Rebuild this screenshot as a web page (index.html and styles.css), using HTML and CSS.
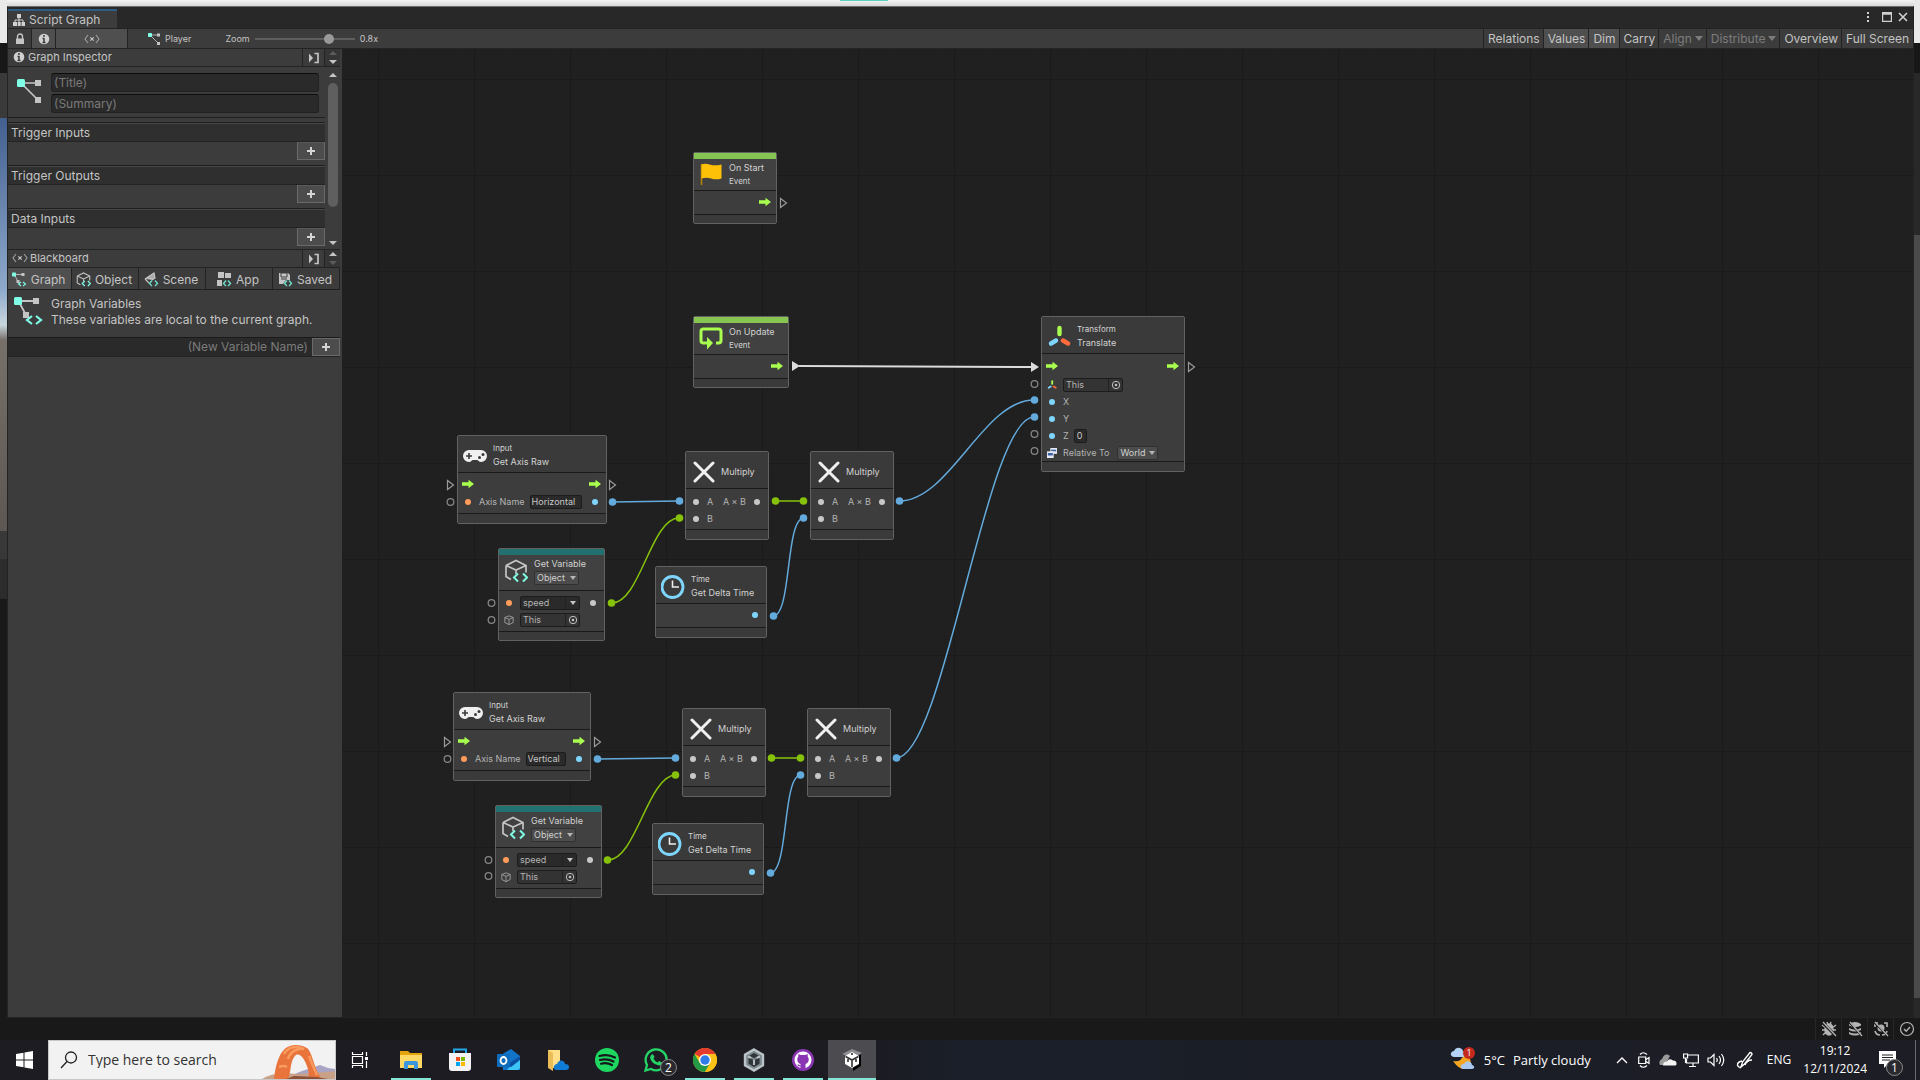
FILE: index.html
```html
<!DOCTYPE html>
<html lang="en">
<head>
<meta charset="utf-8">
<title>Script Graph</title>
<link rel="stylesheet" href="styles.css">
</head>
<body>
<svg class="defs" width="0" height="0" aria-hidden="true">
  <symbol id="arrow" viewBox="0 0 12 10"><path d="M0 3.2h6.5V.8L12 5 6.500 9.200V6.800H0z" fill="#a8ff4e"/></symbol>
  <symbol id="pad" viewBox="0 0 24 24"><path d="M6 6h12a6 6 0 0 1 0 12c-2 0-3-2-4-2h-4c-1 0-2 2-4 2A6 6 0 0 1 6 6z" fill="#f0f0f0"/><path d="M3 12h6M6 9v6" stroke="#3a3a3a" stroke-width="1.600"/><circle cx="20" cy="10.500" r="1.500" fill="#3a3a3a"/><circle cx="16.500" cy="13.500" r="1.500" fill="#3a3a3a"/></symbol>
  <symbol id="times" viewBox="0 0 24 24"><path d="M4 3l18 18M22 3L4 21" stroke="#f0f0f0" stroke-width="3" stroke-linecap="round"/></symbol>
  <symbol id="clock" viewBox="0 0 24 24"><circle cx="11.500" cy="12" r="10.500" fill="none" stroke="#7fd6fd" stroke-width="2.800"/><path d="M11.500 5.500V12h6.500" fill="none" stroke="#eee" stroke-width="1.600"/></symbol>
  <symbol id="cube" viewBox="0 0 24 24"><path d="M2 6.500L12 1.500l10 5v7M2 6.500v11l5 3M2 6.500l10 4.500 10-4.500M12 11v4" fill="none" stroke="#c4c4c4" stroke-width="1.700"/><path d="M14 14.500l-4 4 4 4M19 14.500l4 4-4 4" fill="none" stroke="#7ffbe4" stroke-width="2"/></symbol>
  <symbol id="cubelet" viewBox="0 0 12 12"><path d="M1 3l5-2 5 2v6l-5 2.500L1 9zM1 3l5 2.300L11 3M6 5.300v6" fill="none" stroke="#aaa" stroke-width="1"/></symbol>
  <symbol id="axes" viewBox="0 0 24 24"><path d="M12.500 3v6" stroke="#a8ff4e" stroke-width="4.400" stroke-linecap="round"/><path d="M9 15.500l-5 3" stroke="#7fd6fd" stroke-width="4.400" stroke-linecap="round"/><path d="M16 15.500l5 3" stroke="#ff6b3d" stroke-width="4.400" stroke-linecap="round"/></symbol>
  <symbol id="nodes" viewBox="0 0 24 24"><path d="M4 4h17M4 4l17 17" stroke="#c4c4c4" stroke-width="1.700"/><rect x="18" y="1" width="6" height="6" fill="#c4c4c4"/><rect x="18" y="18" width="6" height="6" fill="#c4c4c4"/><rect x="0" y="0" width="8" height="8" rx="1.500" fill="#7fffe6"/></symbol>
  <symbol id="graphvar" viewBox="0 0 30 30"><path d="M4 5h19M5 6l7 13" stroke="#c4c4c4" stroke-width="1.800"/><rect x="19" y="2" width="6" height="6" fill="#c4c4c4"/><rect x="9" y="16" width="6" height="6" fill="#c4c4c4"/><rect x="0" y="1" width="8" height="8" rx="1.500" fill="#7fffe6"/><path d="M18 20l-5 4 5 4M22 20l5 4-5 4" fill="none" stroke="#7fffe6" stroke-width="2.200"/></symbol>
  <symbol id="info" viewBox="0 0 12 12"><circle cx="6" cy="6" r="5.300" fill="#d0d0d0"/><path d="M6 2v2M6 5v4.500M4.500 5.500H6M4.500 9.500h3" stroke="#3c3c3c" stroke-width="1.500"/></symbol>
  <symbol id="vars" viewBox="0 0 16 10"><path d="M4 1L1 5l3 4M12 1l3 4-3 4" fill="none" stroke="#a0a0a0" stroke-width="1.100"/><path d="M6.300 3.300l3.400 3.400M9.700 3.300L6.300 6.700" stroke="#c4c4c4" stroke-width="1.200"/></symbol>
  <symbol id="dock" viewBox="0 0 12 12"><path d="M1 1.500L5 6 1 10.500z" fill="#c4c4c4"/><path d="M6.500 1.500H10v9H6.500" fill="none" stroke="#c4c4c4" stroke-width="1.700"/></symbol>
  <symbol id="plus" viewBox="0 0 10 10"><path d="M5 1v8M1 5h8" stroke="#d4d4d4" stroke-width="2"/></symbol>
  <symbol id="target" viewBox="0 0 10 10"><circle cx="5" cy="5" r="3.700" fill="none" stroke="#c0c0c0" stroke-width="1"/><circle cx="5" cy="5" r="1.300" fill="#c0c0c0"/></symbol>
  <symbol id="unity" viewBox="0 0 24 24"><path d="M12 1.500l9 5.200v10.600l-9 5.200-9-5.200V6.700z" fill="#7d888f" stroke="#b9c3c9" stroke-width="2.400"/><path d="M12 12.500V19l-5.500-3.200V9.300zM12 12.500V19l5.500-3.200V9.300z" fill="#2e3539"/><path d="M12 5l4.500 2.600L12 10.200 7.500 7.600z" fill="#2e3539"/><path d="M12 12v5M9 10l-3-1.500M15 10l3-1.500" stroke="#c6ced2" stroke-width="1.800"/></symbol>
</svg>

<main class="desktop">
  <section class="window" aria-label="Script Graph">
    <header class="titlebar">
      <div class="tab"><svg width="12" height="12" viewBox="0 0 12 12"><path d="M6 3v6M2 9V6h8v3" fill="none" stroke="#d0d0d0" stroke-width="1"/><path d="M4 0h4v4H4zM0 8h4v4H0zM4.700 8h3v4h-3zM8.500 8H12v4H8.500z" fill="#d0d0d0"/></svg><h1>Script Graph</h1></div>
      <div class="wincontrols">
        <button aria-label="Menu"><svg width="4" height="12" viewBox="0 0 4 12"><path d="M1 1h2v2H1zM1 5h2v2H1zM1 9h2v2H1z" fill="#d0d0d0"/></svg></button>
        <button aria-label="Maximize"><svg width="10" height="10" viewBox="0 0 10 10"><path d="M.5.500h9v9h-9zM0 2h10" fill="none" stroke="#d0d0d0" stroke-width="1.400"/></svg></button>
        <button aria-label="Close"><svg width="10" height="10" viewBox="0 0 10 10"><path d="M1 1l8 8M9 1L1 9" stroke="#d0d0d0" stroke-width="1.600"/></svg></button>
      </div>
    </header>

    <div class="toolbar">
      <button class="tool" aria-label="Lock"><svg width="10" height="12" viewBox="0 0 10 12"><path d="M2.500 6V3.500a2.500 2.500 0 0 1 5 0V6" fill="none" stroke="#c4c4c4" stroke-width="1.400"/><rect x="1" y="5.500" width="8" height="5.500" fill="#c4c4c4"/></svg></button>
      <button class="tool on" aria-label="Inspector"><svg width="12" height="12"><use href="#info"/></svg></button>
      <button class="tool wide on" aria-label="Blackboard"><svg width="16" height="10"><use href="#vars"/></svg></button>
      <span class="crumb"><svg width="12" height="12"><use href="#nodes"/></svg>Player</span>
      <label class="zoom">Zoom <input type="range" min="0" max="100" value="77"> <output>0.8x</output></label>
      <nav class="toggles">
        <button>Relations</button><button class="on">Values</button><button class="on">Dim</button><button>Carry</button><button class="off">Align<i></i></button><button class="off">Distribute<i></i></button><button>Overview</button><button>Full Screen</button>
      </nav>
    </div>

    <div class="content">
      <aside class="side">
        <div class="panelhead"><h2><svg width="12" height="12"><use href="#info"/></svg>Graph Inspector</h2><button class="dock" aria-label="Dock inspector"><svg width="12" height="12"><use href="#dock"/></svg></button><span class="updown"><i class="up dim"></i><i class="down"></i></span></div>
        <div class="inspector">
          <div class="fields">
            <div class="meta"><svg width="24" height="24"><use href="#nodes"/></svg><div class="inputs"><input aria-label="Title" placeholder="(Title)"><input aria-label="Summary" placeholder="(Summary)"></div></div>
            <section class="ports"><h3>Trigger Inputs</h3><div><button aria-label="Add trigger input"><svg width="10" height="10"><use href="#plus"/></svg></button></div></section>
            <section class="ports"><h3>Trigger Outputs</h3><div><button aria-label="Add trigger output"><svg width="10" height="10"><use href="#plus"/></svg></button></div></section>
            <section class="ports"><h3>Data Inputs</h3><div><button aria-label="Add data input"><svg width="10" height="10"><use href="#plus"/></svg></button></div></section>
          </div>
          <div class="scroll"><i class="up"></i><span></span><i class="down"></i></div>
        </div>
        <div class="panelhead board"><h2><svg width="16" height="10"><use href="#vars"/></svg>Blackboard</h2><button class="dock" aria-label="Dock blackboard"><svg width="12" height="12"><use href="#dock"/></svg></button><span class="updown"><i class="up"></i><i class="down dim"></i></span></div>
        <nav class="tabs">
          <button class="on"><svg width="15" height="15"><use href="#graphvar"/></svg>Graph</button>
          <button><svg width="15" height="15"><use href="#cube"/></svg>Object</button>
          <button><svg width="15" height="15" viewBox="0 0 15 15"><path d="M1 7l9-6 1 5-3 2M1 7l4 4M4 6l5 1" fill="#aaa" stroke="#c4c4c4" stroke-width="1.200"/><path d="M8 8.500L5.500 11.500 8 14M11 8.500l2.500 3L11 14" fill="none" stroke="#6fdcc9" stroke-width="1.400"/></svg>Scene</button>
          <button><svg width="15" height="15" viewBox="0 0 15 15"><path d="M1 0h6v6H1zM8 1h6v5H8zM0 8h5v6H0z" fill="#c4c4c4"/><path d="M9 8.500L6.500 11.500 9 14M11 8.500l2.500 3L11 14" fill="none" stroke="#6fdcc9" stroke-width="1.400"/></svg>App</button>
          <button><svg width="15" height="15" viewBox="0 0 15 15"><path d="M1 1h9l2 2v5H8l-3 4H1z" fill="#c4c4c4"/><path d="M3 1h6v4H3zM3 7h6" fill="none" stroke="#3c3c3c"/><path d="M9 8.500L6.500 11.500 9 14M11 8.500l2.500 3L11 14" fill="none" stroke="#6fdcc9" stroke-width="1.400"/></svg>Saved</button>
        </nav>
        <div class="about"><svg width="30" height="30"><use href="#graphvar"/></svg><div><h3>Graph Variables</h3><p>These variables are local to the current graph.</p></div></div>
        <div class="newvar"><input aria-label="New variable name" placeholder="(New Variable Name)"><button aria-label="Add variable"><svg width="10" height="10"><use href="#plus"/></svg></button></div>
      </aside>

      <div class="canvas">
        <svg class="wires" width="100%" height="100%">
          <defs>
            <pattern id="grid" x="36" y="30" width="96" height="96" patternUnits="userSpaceOnUse">
              <path d="M10.500 0v96M19.500 0v96M29.500 0v96M38.500 0v96M48.500 0v96M58.500 0v96M67.500 0v96M77.500 0v96M86.500 0v96M0 10.500h96M0 19.500h96M0 29.500h96M0 38.500h96M0 48.500h96M0 58.500h96M0 67.500h96M0 77.500h96M0 86.500h96" stroke="#1f1f1f"/>
              <path d="M.5 0v96M0 .5h96" stroke="#1a1a1a"/>
            </pattern>
          </defs>
          <rect width="100%" height="100%" fill="url(#grid)"/>
          <g transform="translate(-342 -49)" fill="none">
            <path d="M799 366L1031 367" stroke="#dcdcdc" stroke-width="2"/>
            <g stroke="#63aadd" stroke-width="1.500">
              <path d="M612 502L679 501"/>
              <path d="M899 501C950 501 983 400 1034 400"/>
              <path d="M773 616C792 616 785 518 804 518"/>
              <path d="M598 759L676 758"/>
              <path d="M896 758C944 758 986 417 1034 417"/>
              <path d="M770 873C789 873 782 775 801 775"/>
            </g>
            <g stroke="#86c20a" stroke-width="1.500">
              <path d="M612 603C640 603 651 518 679 518"/>
              <path d="M775 501H804M771 758H801"/>
              <path d="M608 860C636 860 648 775 676 775"/>
            </g>
            <g fill="#63aadd"><circle cx="612.500" cy="502" r="3.800"/><circle cx="679.500" cy="501" r="3.800"/><circle cx="803.500" cy="518" r="3.800"/><circle cx="899.500" cy="501" r="3.800"/><circle cx="773.500" cy="616" r="3.800"/><circle cx="1034.500" cy="400" r="3.800"/><circle cx="1034.500" cy="417" r="3.800"/><circle cx="597.500" cy="759" r="3.800"/><circle cx="675.500" cy="758" r="3.800"/><circle cx="800.500" cy="775" r="3.800"/><circle cx="896.500" cy="758" r="3.800"/><circle cx="770.500" cy="873" r="3.800"/></g>
            <g fill="#86c20a"><circle cx="679.500" cy="518" r="3.800"/><circle cx="775.500" cy="501" r="3.800"/><circle cx="803.500" cy="501" r="3.800"/><circle cx="611.500" cy="603" r="3.800"/><circle cx="675.500" cy="775" r="3.800"/><circle cx="771.500" cy="758" r="3.800"/><circle cx="800.500" cy="758" r="3.800"/><circle cx="607.500" cy="860" r="3.800"/></g>
            <g stroke="#858585" stroke-width="1.300"><circle cx="1034.500" cy="384" r="3.300"/><circle cx="1034.500" cy="434" r="3.300"/><circle cx="1034.500" cy="451" r="3.300"/><circle cx="450.500" cy="502" r="3.300"/><circle cx="491.500" cy="603" r="3.300"/><circle cx="491.500" cy="620" r="3.300"/><circle cx="447.500" cy="759" r="3.300"/><circle cx="488.500" cy="860" r="3.300"/><circle cx="488.500" cy="876" r="3.300"/></g>
            <g stroke="#9a9a9a" stroke-width="1.200"><path d="M780.500 198.500v9l6-4.500zM1188.500 362.500v9l6-4.500zM447.500 480.500v9l6-4.500zM609.500 480.500v9l6-4.500zM444.500 737.500v9l6-4.500zM594.500 737.500v9l6-4.500z"/></g>
            <path d="M792 361v10l8-5zM1031 362v10l8-5z" fill="#dcdcdc"/>
          </g>
        </svg>

        <article class="node start n84">
          <div class="band green"></div>
          <header><svg width="24" height="24" viewBox="0 0 24 24"><path d="M2.500 2v21" stroke="#b98500" stroke-width="1.500"/><path d="M2.500 2.500c6-3 9 3 20 0v14c-9 3-12-3-20 0z" fill="#ffc107"/></svg><div><h4>On Start</h4><small>Event</small></div></header>
          <div class="body"><div class="row end"><svg class="cell"><use href="#arrow"/></svg></div></div><footer></footer>
        </article>

        <article class="node update n96">
          <div class="band green"></div>
          <header><svg width="24" height="24" viewBox="0 0 24 24"><path d="M17 17h2.500q2.500 0 2.500-2.500v-9Q22 3 19.500 3h-15Q2 3 2 5.500v9Q2 17 4.500 17H8" fill="none" stroke="#a8ff4e" stroke-width="3"/><path d="M8 11l6 6-6 6.500z" fill="#a8ff4e"/></svg><div><h4>On Update</h4><small>Event</small></div></header>
          <div class="body"><div class="row end"><svg class="cell"><use href="#arrow"/></svg></div></div><footer></footer>
        </article>

        <article class="node translate n144">
          <header><svg width="24" height="24"><use href="#axes"/></svg><div><small>Transform</small><h4>Translate</h4></div></header>
          <div class="body">
            <div class="row flow"><svg class="cell"><use href="#arrow"/></svg><svg class="cell last"><use href="#arrow"/></svg></div>
            <div class="row"><svg class="cell"><use href="#axes"/></svg><span class="ref"><input aria-label="Target" value="This"><button aria-label="Pick target"><svg width="10" height="10"><use href="#target"/></svg></button></span></div>
            <div class="row"><b class="cell dot blue"></b>X</div>
            <div class="row"><b class="cell dot blue"></b>Y</div>
            <div class="row"><b class="cell dot blue"></b><label>Z <input class="value one" value="0"></label></div>
            <div class="row"><svg class="cell" viewBox="0 0 12 12"><path d="M4 0h8v7H4z" fill="#e6ecf5"/><path d="M5 2h6v2H5z" fill="#3c62a8"/><path d="M0 4h8v8H0z" fill="#e6ecf5"/><path d="M1 6h6v3H1z" fill="#3c62a8"/></svg><label class="relative">Relative To <span class="select"><select class="world"><option>World</option><option>Self</option></select></span></label></div>
          </div><footer></footer>
        </article>

        <article class="node axis1 n150">
          <header><svg width="24" height="24"><use href="#pad"/></svg><div><small>Input</small><h4>Get Axis Raw</h4></div></header>
          <div class="body">
            <div class="row"><svg class="cell"><use href="#arrow"/></svg><svg class="cell last"><use href="#arrow"/></svg></div>
            <div class="row"><b class="cell dot orange"></b><label>Axis Name <input class="value horizontal" value="Horizontal"></label><b class="cell dot blue last"></b></div>
          </div><footer></footer>
        </article>

        <article class="node mult1 n84">
          <header><svg width="24" height="24"><use href="#times"/></svg><div><h4>Multiply</h4></div></header>
          <div class="body low">
            <div class="row"><b class="cell dot"></b>A<span class="out">A × B</span><b class="cell dot"></b></div>
            <div class="row"><b class="cell dot"></b>B</div>
          </div><footer></footer>
        </article>

        <article class="node mult2 n84">
          <header><svg width="24" height="24"><use href="#times"/></svg><div><h4>Multiply</h4></div></header>
          <div class="body low">
            <div class="row"><b class="cell dot"></b>A<span class="out">A × B</span><b class="cell dot"></b></div>
            <div class="row"><b class="cell dot"></b>B</div>
          </div><footer></footer>
        </article>

        <article class="node var1 n107">
          <div class="band teal"></div>
          <header><svg width="24" height="24"><use href="#cube"/></svg><div><h4>Get Variable</h4><span class="select"><select aria-label="Variable kind"><option>Object</option></select></span></div></header>
          <div class="body vars">
            <div class="row"><b class="cell dot orange"></b><span class="ref name"><input aria-label="Variable name" value="speed"><button aria-label="Choose variable"><i class="down"></i></button></span><b class="cell dot last"></b></div>
            <div class="row"><svg class="cell"><use href="#cubelet"/></svg><span class="ref"><input aria-label="Target" value="This"><button aria-label="Pick target"><svg width="10" height="10"><use href="#target"/></svg></button></span></div>
          </div><footer></footer>
        </article>

        <article class="node time1 n112">
          <header><svg width="24" height="24"><use href="#clock"/></svg><div><small>Time</small><h4>Get Delta Time</h4></div></header>
          <div class="body"><div class="row end"><b class="cell dot blue"></b></div></div><footer></footer>
        </article>

        <article class="node axis2 n138">
          <header><svg width="24" height="24"><use href="#pad"/></svg><div><small>Input</small><h4>Get Axis Raw</h4></div></header>
          <div class="body">
            <div class="row"><svg class="cell"><use href="#arrow"/></svg><svg class="cell last"><use href="#arrow"/></svg></div>
            <div class="row"><b class="cell dot orange"></b><label>Axis Name <input class="value vertical" value="Vertical"></label><b class="cell dot blue last"></b></div>
          </div><footer></footer>
        </article>

        <article class="node mult3 n84">
          <header><svg width="24" height="24"><use href="#times"/></svg><div><h4>Multiply</h4></div></header>
          <div class="body low">
            <div class="row"><b class="cell dot"></b>A<span class="out">A × B</span><b class="cell dot"></b></div>
            <div class="row"><b class="cell dot"></b>B</div>
          </div><footer></footer>
        </article>

        <article class="node mult4 n84">
          <header><svg width="24" height="24"><use href="#times"/></svg><div><h4>Multiply</h4></div></header>
          <div class="body low">
            <div class="row"><b class="cell dot"></b>A<span class="out">A × B</span><b class="cell dot"></b></div>
            <div class="row"><b class="cell dot"></b>B</div>
          </div><footer></footer>
        </article>

        <article class="node var2 n107">
          <div class="band teal"></div>
          <header><svg width="24" height="24"><use href="#cube"/></svg><div><h4>Get Variable</h4><span class="select"><select aria-label="Variable kind"><option>Object</option></select></span></div></header>
          <div class="body vars">
            <div class="row"><b class="cell dot orange"></b><span class="ref name"><input aria-label="Variable name" value="speed"><button aria-label="Choose variable"><i class="down"></i></button></span><b class="cell dot last"></b></div>
            <div class="row"><svg class="cell"><use href="#cubelet"/></svg><span class="ref"><input aria-label="Target" value="This"><button aria-label="Pick target"><svg width="10" height="10"><use href="#target"/></svg></button></span></div>
          </div><footer></footer>
        </article>

        <article class="node time2 n112">
          <header><svg width="24" height="24"><use href="#clock"/></svg><div><small>Time</small><h4>Get Delta Time</h4></div></header>
          <div class="body"><div class="row end"><b class="cell dot blue"></b></div></div><footer></footer>
        </article>
      </div>
    </div>
  </section>

  <div class="status">
    <span><svg width="16" height="16" viewBox="0 0 16 16"><path d="M8 3c3 0 4 3 4 6s-2 5-4 5-4-2-4-5 1-6 4-6zM1 4l4 3M15 4l-4 3M1 9h14M2 14l3-3M14 14l-3-3M6 1l1 3M10 1L9 4" fill="#b4b4b4" stroke="#b4b4b4" stroke-width="1.400"/><path d="M1 1l14 14" stroke="#1a1a1a" stroke-width="3"/><path d="M2 1l13 14" stroke="#b4b4b4" stroke-width="1.300"/></svg></span>
    <span><svg width="16" height="16" viewBox="0 0 16 16"><path d="M2 3q6-4 12 0v1.500q-6 3-12 0zM2 7q6 3 12 0v2q-6 3-12 0zM2 11q6 3 12 0v2q-6 3-12 0z" fill="#b4b4b4"/><path d="M2 1l13 14" stroke="#1a1a1a" stroke-width="2"/><path d="M3 1l12 14" stroke="#b4b4b4" stroke-width="1.300"/></svg></span>
    <span><svg width="16" height="16" viewBox="0 0 16 16"><path d="M5 2H2v4M11 2h3v4M2 10q1 4 5 4M14 10q-1 4-5 4" fill="none" stroke="#b4b4b4" stroke-width="1.600"/><circle cx="8" cy="7" r="3.500" fill="#b4b4b4"/><path d="M1 1l14 14" stroke="#1a1a1a" stroke-width="2"/><path d="M2 1l13 14" stroke="#b4b4b4" stroke-width="1.300"/></svg></span>
    <span><svg width="16" height="16" viewBox="0 0 16 16"><circle cx="8" cy="8" r="6.500" fill="none" stroke="#b4b4b4" stroke-width="1.200"/><path d="M5 8l2.200 2.300L11 6" fill="none" stroke="#b4b4b4" stroke-width="1.400"/></svg></span>
  </div>
</main>

<footer class="taskbar">
  <button class="app" aria-label="Start"><svg width="17" height="18" viewBox="0 0 17 18"><path d="M0 3l7.500-1.200v6.700H0zM8.500 1.600L17 0v8.500H8.500zM0 9.500h7.500v6.700L0 15zM8.500 9.500H17V18l-8.500-1.500z" fill="#fff"/></svg></button>
  <label class="search"><svg width="18" height="18" viewBox="0 0 18 18"><circle cx="11" cy="6.500" r="5.500" fill="none" stroke="#222" stroke-width="1.300"/><path d="M7 10.500L1 17" stroke="#222" stroke-width="1.300"/></svg><input aria-label="Search" placeholder="Type here to search"><svg class="arch" width="76" height="36" viewBox="-3 0 76 36"><path d="M40 28q10-3 18-6 8 4 18 4v10H20z" fill="#a9a4c4"/><path d="M0 36q12-8 34-5l42-3v8z" fill="#c9a088"/><path d="M12 36c2-16 6-30 16-33 5-2 12-1 17 2 6 5 7 22 15 31H46c3-4-2-19-7-23-4-3-6-1-8 3-3 6-2 13-5 20z" fill="#e8743c"/><path d="M22 11c4-7 12-9 20-5-6-1-14 2-16 10M47 13q3 8 8 19M17 24q5-2 8 0" fill="none" stroke="#f99b5e" stroke-width="2.500"/><path d="M24 36l8-3 22 1 12 2z" fill="#8d5038"/></svg></label>
  <nav class="apps">
    <button class="app view" aria-label="Task View"><svg width="18" height="16" viewBox="0 0 18 16"><path d="M1.500 0v2.500h10V0M1.500 16v-2.500h10V16M1.500 4.500h10v7h-10zM15.500 0v4M15.500 9v7" fill="none" stroke="#fff" stroke-width="1.200"/><path d="M14 5h3v3h-3z" fill="#fff"/></svg></button>
    <button class="app run" aria-label="File Explorer"><svg width="22" height="20" viewBox="0 0 22 20"><path d="M0 1h8l2 2h12v15H0z" fill="#e6a40c"/><path d="M0 5h22v13H0z" fill="#ffd965"/><path d="M4 19v-6q0-2 2-2h10q2 0 2 2v6h-4v-4H8v4z" fill="#3c96de"/></svg></button>
    <button class="app" aria-label="Microsoft Store"><svg width="24" height="24" viewBox="0 0 24 24"><path d="M6 6V1.500h12V6" fill="none" stroke="#23a8e8" stroke-width="2"/><path d="M1 5h22v15q0 3-3 3H4q-3 0-3-3z" fill="#f3f3f3"/><path d="M8 9h4v4H8z" fill="#f25022"/><path d="M13 9h4v4h-4z" fill="#7fba00"/><path d="M8 14h4v4H8z" fill="#00a4ef"/><path d="M13 14h4v4h-4z" fill="#ffb900"/></svg></button>
    <button class="app" aria-label="Outlook"><svg width="24" height="24" viewBox="0 0 24 24"><path d="M4 7l10-6 9 7v14H6z" fill="#1274c8"/><path d="M23 8L10 22h10q3 0 3-3z" fill="#3cc5f5"/><path d="M10 17l13-9v4L14 19z" fill="#0b50a0"/><rect x="0" y="6" width="13" height="13" rx="1" fill="#0f6cbd"/><ellipse cx="6.500" cy="12.500" rx="3" ry="3.500" fill="none" stroke="#fff" stroke-width="1.800"/></svg></button>
    <button class="app" aria-label="Documents"><svg width="22" height="22" viewBox="0 0 22 22"><path d="M1 1h12v18H1z" fill="#ffdf87"/><path d="M1 1l5 3v18l-5-3z" fill="#e9bc55"/><path d="M9 21q-3-1-2-4 1-2 3-2 2-5 6-3 2 1 2 3 4 0 4 3 0 3-3 3z" fill="#0f7bd4"/></svg></button>
    <button class="app" aria-label="Spotify"><svg width="24" height="24" viewBox="0 0 24 24"><circle cx="12" cy="12" r="12" fill="#1ed760"/><path d="M4.500 8q8-2.500 15.500 1.500M5 12q7-2 13.500 1.500M6 15.700q6-1.500 11 1.300" fill="none" stroke="#14181b" stroke-width="2.200" stroke-linecap="round"/></svg></button>
    <button class="app" aria-label="WhatsApp"><svg width="24" height="24" viewBox="0 0 24 24"><path d="M1.500 22.500L3 17A10.500 10.500 0 1 1 7 21z" fill="none" stroke="#25d366" stroke-width="2.300"/><path d="M7 7q2-2 3 1l.5 1-1 1.500q1.500 3 4 4l1.500-1.500 3 1.500q0 3-3 3-8-2-9-8z" fill="#25d366"/></svg><span class="badge">2</span></button>
    <button class="app run" aria-label="Chrome"><svg width="24" height="24" viewBox="0 0 24 24"><circle cx="12" cy="12" r="12" fill="#fbc116"/><path d="M12 12L1.600 6A12 12 0 0 1 22.400 6H12z" fill="#e33b2e"/><path d="M1.600 6A12 12 0 0 0 12 24l5.200-9L12 12 6.800 15z" fill="#229a47"/><path d="M12 6h10.400A12 12 0 0 1 12 24l5.200-9z" fill="#fbc116"/><circle cx="12" cy="12" r="6" fill="#fff"/><circle cx="12" cy="12" r="4.700" fill="#2f7bea"/></svg></button>
    <button class="app run" aria-label="Unity Hub"><svg width="24" height="24"><use href="#unity"/></svg></button>
    <button class="app run" aria-label="GitHub Desktop"><svg width="22" height="22" viewBox="0 0 22 22"><circle cx="11" cy="11" r="11" fill="#8a35b4"/><circle cx="11" cy="11" r="8.500" fill="#fff"/><path d="M8.500 20v-5Q5 13.500 5.300 10q0-1.500 1-2.500V5l2.500 1h4.400l2.500-1v2.500q1 1 1 2.500.3 3.500-3.200 5v5z" fill="#8a35b4"/><path d="M8.800 16.800q-2.300.4-3-1.300" fill="none" stroke="#8a35b4" stroke-width="1.200"/></svg></button>
    <button class="app run active" aria-label="Unity Editor"><svg width="24" height="24" viewBox="0 0 24 24"><path d="M2 6l10-5 10 4-9 5z" fill="#8e8e90"/><path d="M13 12l8-6v12l-8 5z" fill="#000"/><path d="M12 4l7 4v8l-7 4-7-4V8z" fill="#fff"/><path d="M12 12v7M12 12L5.500 8.500M12 12l6.500-3.500M8 11v3M16 11v3M12 5v2" stroke="#333" stroke-width="1.600"/></svg></button>
  </nav>
  <div class="tray">
    <a href="#weather" class="weather"><svg width="26" height="26" viewBox="0 0 26 26"><path d="M3 14q8 2 11-7 9 4 6 12-8 8-17-5z" fill="#f5a623"/><path d="M4 10q-4-1-3-4 1-2 3-2 2-4 6-3 3 1 3 3 4 1 2 5-1 1-3 1z" fill="#b5d2f6"/><path d="M13 22q-3-1-2-4 1-1 3-1 2-4 6-2 2 1 2 3 3 1 2 3-1 1-2 1z" fill="#a9c8f2"/><circle cx="19" cy="6" r="6" fill="#c42b1c"/><text x="19" y="9" text-anchor="middle">1</text></svg><span>5°C</span><span>Partly cloudy</span></a>
    <svg class="chevron" width="12" height="8" viewBox="0 0 12 8"><path d="M1 7l5-5 5 5" fill="none" stroke="#fff" stroke-width="1.400"/></svg>
    <svg class="meet" width="12" height="18" viewBox="0 0 12 18"><path d="M.700 6h7v6.500h-7zM8 8.500l3-2v6l-3-2M2 3.500Q5 0 9 3.500M2 14.500q3 3.500 7 0" fill="none" stroke="#fff" stroke-width="1.200"/></svg>
    <svg class="cloud" width="18" height="12" viewBox="0 0 18 12"><path d="M1 11q-2-4 2-6 3-7 8-3l-5 9z" fill="#9a9a9a"/><path d="M4 11.500q0-4 4-4 2-4 6-1 4 0 3.500 4l-1 1z" fill="#f3f3f3"/></svg>
    <svg width="16" height="16" viewBox="0 0 16 16"><path d="M5 3h10.400v8H3.500V7M10 11v3.500M6 14.500h7M.600 2h4v4h-4zM2.500 6v5" fill="none" stroke="#fff" stroke-width="1.200"/></svg>
    <svg width="18" height="14" viewBox="0 0 18 14"><path d="M1 5h2.500L7 1.500v11L3.500 9H1zM9.500 5q1.500 2 0 4M12 3q3 4 0 8M14.500 1q4.500 6 0 12" fill="none" stroke="#fff" stroke-width="1.200"/></svg>
    <svg class="pen" width="18" height="18" viewBox="0 0 18 18"><path d="M5 16l1.500-5L14 1.500q2 0 2 2L8.500 13zM6 10q-5 1-4.500 4.500 3 4 5-1M9 14q2-5 7-5" fill="none" stroke="#fff" stroke-width="1.300"/></svg>
    <span class="lang">ENG</span>
    <time><span>19:12</span><span>12/11/2024</span></time>
    <button class="notes" aria-label="Notifications"><svg width="17" height="18" viewBox="0 0 17 18"><path d="M0 0h17v13h-8l-4 4v-4H0z" fill="#fff"/><path d="M3 4h11M3 6.500h11M3 9h8" stroke="#222" stroke-width="1.200"/></svg><span class="badge">1</span></button>
  </div>
</footer>
</body>
</html>
```
FILE: styles.css
```css
* { box-sizing: border-box; }
body { margin: 0; height: 100vh; display: flex; flex-direction: column; overflow: hidden; background: #191919; color: #c4c4c4; font: 12px/16px Inter, "Liberation Sans", sans-serif; }
h1, h2, h3, h4, p { margin: 0; font: inherit; }
button, input, select { font: inherit; color: inherit; border: 0; padding: 0; margin: 0; background: none; border-radius: 0; min-width: 0; }
button { display: flex; align-items: center; justify-content: center; }
svg { display: block; flex: none; }
.defs { position: absolute; }
i.up, i.down { display: block; width: 0; height: 0; border: 4px solid transparent; flex: none; }
i.up { border-top: 0; border-bottom-color: #c4c4c4; }
i.down { border-bottom: 0; border-top-color: #c4c4c4; }
i.up.dim { border-bottom-color: #5c5c5c; }
i.down.dim { border-top-color: #5c5c5c; }

/* Desktop behind the editor window */
.desktop { flex: 1; min-height: 0; display: flex; flex-direction: column; padding-top: 6px; background:
  linear-gradient(#5fd0bd, #5fd0bd) 840px 0 / 48px 1px no-repeat,
  linear-gradient(#e9e9e9 43px, #171717 43px 73px, #3a3a3a 73px 118px, #42608f 118px, #8fa9cc 290px, #c8d6dd 325px, #77706a 340px, #5c5753 531px, #383838 531px 559px, #2c2c2c 559px 599px, #191919 599px) 0 0 / 7px 100% no-repeat,
  linear-gradient(#e9e9e9 43px, #171717 43px 73px, #282828 73px 235px, #4a4a4a 235px 998px, #282828 998px 1018px, #191919 1018px) 100% 0 / 6px 100% no-repeat,
  linear-gradient(#f4f4f4, #d8d8d8 6px, #191919 6px); }
.window { flex: 1; min-height: 0; display: flex; flex-direction: column; margin: 0 6px 0 7px; border: 1px solid #232323; border-top-color: #6e6e6e; background: #3c3c3c; }
.titlebar { height: 21px; display: flex; justify-content: space-between; padding-top: 2px; background: #282828; }
.tab { display: flex; align-items: center; gap: 4px; width: 109px; padding-left: 5px; background: #3c3c3c; border-top: 2px solid #2c5d87; }
.wincontrols { display: flex; align-items: center; gap: 6px; padding: 0 5px 3px 0; }
.wincontrols button:first-child { margin-right: 6px; }

.toolbar { height: 21px; display: flex; align-items: stretch; border-top: 1px solid #232323; border-bottom: 1px solid #232323; }
.tool { width: 24px; border-right: 1px solid #232323; }
.tool.wide { width: 72px; }
.on { background: #4f4f4f; }
.crumb { display: flex; align-items: center; gap: 5px; padding-left: 20px; font-size: 9px; }
.zoom { display: flex; align-items: center; margin-left: 34px; font-size: 9px; gap: 5px; }
.zoom input { appearance: none; width: 100px; height: 10px; }
.zoom input::-webkit-slider-runnable-track { height: 2px; background: #5e5e5e; }
.zoom input::-webkit-slider-thumb { appearance: none; width: 10px; height: 10px; margin-top: -4px; border-radius: 50%; background: #999; }
.toggles { margin-left: auto; display: flex; padding-right: 1px; }
.toggles button { padding: 0 3px 0 4px; border-left: 1px solid #232323; }
.toggles .off { color: #7c7c7c; }
.toggles i { margin-left: 3px; border: 4px solid transparent; border-top: 5px solid #7c7c7c; border-bottom: 0; }

.content { flex: 1; min-height: 0; display: flex; }
.side { width: 334px; flex: none; display: flex; flex-direction: column; padding-right: 2px; background: #3c3c3c; }
.panelhead { height: 18px; display: flex; border-bottom: 1px solid #232323; font-size: 11px; }
.panelhead h2 { flex: 1; display: flex; align-items: center; gap: 3px; padding: 0 0 1px 5px; }
.dock { width: 23px; border-left: 1px solid #232323; border-right: 1px solid #232323; }
.updown { width: 15px; display: flex; flex-direction: column; align-items: center; justify-content: space-around; background: #353535; }
.board { height: 19px; border-top: 1px solid #232323; }
.board h2 { gap: 2px; padding-left: 4px; }

.inspector { height: 182px; display: flex; overflow: hidden; }
.fields { flex: 1; }
.meta { display: flex; gap: 10px; padding: 6px 6px 4px 9px; border-bottom: 1px solid #1f1f1f; margin-bottom: 4px; }
.meta > svg { margin-top: 6px; }
.inputs { flex: 1; display: flex; flex-direction: column; gap: 2px; }
.inputs input { width: 100%; height: 19px; padding: 0 2px; background: #2a2a2a; border: 1px solid #212121; border-top-color: #0d0d0d; border-radius: 3px; }
::placeholder { color: #7a7a7a; opacity: 1; }
.ports { height: 43px; border-top: 1px solid #1f1f1f; }
.ports h3 { height: 19px; line-height: 17px; padding-left: 3px; background: #2f2f2f; border-top: 1px solid #464646; border-bottom: 1px solid #232323; }
.ports div { display: flex; justify-content: flex-end; }
.ports button { width: 28px; height: 18px; background: #4c4c4c; border: 1px solid #6a6a6a; border-top-color: #5a5a5a; }
.scroll { width: 15px; display: flex; flex-direction: column; align-items: center; padding: 6px 0 4px; }
.scroll span { width: 10px; height: 124px; margin: 6px 0 auto; border-radius: 5px; background: #5f5f5f; }

.tabs { height: 22px; display: grid; grid-template-columns: 64px repeat(4, 67px); border-bottom: 1px solid #1f1f1f; }
.tabs button { gap: 4px; padding: 2px 2px 0 0; border-right: 1px solid #232323; }
.about { height: 48px; display: flex; gap: 7px; padding: 6px; border-bottom: 1px solid #1a1a1a; }
.newvar { height: 19px; display: flex; border-bottom: 1px solid #232323; }
.newvar input { flex: 1; padding-right: 4px; text-align: right; background: #2a2a2a; }
.newvar button { width: 28px; background: #4c4c4c; border: 1px solid #6a6a6a; }

.canvas { flex: 1; min-width: 0; position: relative; overflow: hidden; background: #202020; font-size: 9px; line-height: 12px; }
.wires { position: absolute; inset: 0; }
.node { position: absolute; border: 1px solid #626262; border-radius: 2px; background: #3d3d3d; color: #b4b4b4; }
.node header { height: 37px; display: flex; align-items: center; gap: 6px; padding: 4px 0 0 5px; border-bottom: 1px solid #1a1a1a; color: #d2d2d2; background: #3a3a3a; }
.node header small { display: block; font-size: 8px; line-height: 12px; }
.node header h4 { line-height: 16px; }
.band { height: 6px; }
.node .band + header { height: 32px; padding: 0 0 2px 5px; background: #414141; }
.node .band.teal + header { height: 36px; padding-bottom: 4px; }
.node .band + header h4 { line-height: 14px; }
.green { background: #86c552; }
.teal { background: #22706f; }
.node footer { height: 10px; border-top: 1px solid #1a1a1a; background: #3a3a3a; }
.band ~ footer { height: 9px; }
.body { display: flex; flex-direction: column; gap: 1px; padding: 2px 5px 3px 4px; }
.body.low { gap: 0; padding: 4px 5px 2px 4px; }
.body.vars { gap: 0; padding: 3px 5px 3px 4px; }
.translate .body { gap: 0; padding: 3px 5px 0 4px; }
.translate .flow { margin-bottom: 2px; }
.row { height: 17px; display: flex; align-items: center; gap: 5px; }
.body > .row.end { height: 18px; justify-content: flex-end; }
.cell { width: 12px; height: 10px; flex: none; }
.last { margin-left: auto; }
.out { margin-left: auto; }
.dot::before { content: ""; display: block; width: 6px; height: 6px; margin: 2px 3px; border-radius: 50%; background: #c8c8c8; }
.dot.blue::before { background: #7fd6fd; }
.dot.orange::before { background: #ff9c5a; }
.row label { display: flex; align-items: center; gap: 5px; }
.row .relative { gap: 8px; }
.value, .ref { height: 14px; background: #2a2a2a; border: 1px solid #1c1c1c; border-radius: 2px; }
.value { padding: 0 1px; color: #c8c8c8; }
.one { width: 13px; padding-left: 2px; }
.horizontal { width: 52px; }
.vertical { width: 40px; }
.ref { display: flex; width: 60px; background: #333; }
.ref.name { background: #2a2a2a; }
.ref input { flex: 1; width: 0; padding-left: 2px; }
.ref button { width: 14px; border-left: 1px solid #222; }
.ref i.down, .select::after { border-width: 4px 3px 0; }
.select { position: relative; display: block; width: max-content; }
.select::after { content: ""; position: absolute; right: 3px; top: 5px; border-style: solid; border-color: #b4b4b4 transparent transparent; }
.select select { appearance: none; display: block; width: 45px; height: 14px; padding-left: 2px; background: #4c4c4c; border: 1px solid #303030; border-radius: 2px; color: #d0d0d0; }
.select .world { width: 41px; }
.n84 { width: 84px; }
.n96 { width: 96px; }
.n107 { width: 107px; }
.n112 { width: 112px; }
.n138 { width: 138px; }
.n144 { width: 144px; }
.n150 { width: 150px; }
.start { left: 351px; top: 103px; }
.update { left: 351px; top: 267px; }
.translate { left: 699px; top: 267px; }
.axis1 { left: 115px; top: 386px; }
.mult1 { left: 343px; top: 402px; }
.mult2 { left: 468px; top: 402px; }
.var1 { left: 156px; top: 499px; }
.time1 { left: 313px; top: 517px; }
.axis2 { left: 111px; top: 643px; }
.mult3 { left: 340px; top: 659px; }
.mult4 { left: 465px; top: 659px; }
.var2 { left: 153px; top: 756px; }
.time2 { left: 310px; top: 774px; }

.status { height: 22px; flex: none; display: flex; justify-content: flex-end; padding-right: 1px; }
.status span { width: 26px; display: flex; align-items: center; justify-content: center; border-left: 1px solid #262626; }

/* Taskbar */
.taskbar { height: 40px; flex: none; display: flex; background: linear-gradient(90deg, #1c1c22 45%, #1a1f29 50%, #1b1e27 70%, #1d1d25); color: #fff; font-family: "Open Sans", "Noto Sans", sans-serif; font-size: 14px; }
.app { width: 48px; height: 40px; position: relative; }
.search { width: 288px; display: flex; align-items: center; gap: 10px; padding-left: 11px; background: #f2f2f2; border: 1px solid #c8c8c8; color: #333; }
.search input { flex: 1; width: 0; outline: 0; }
.search ::placeholder { color: #333; }
.arch { align-self: flex-end; }
.apps { display: flex; gap: 1px; }
.view { margin-right: 2px; }
.run::after { content: ""; position: absolute; left: 4px; right: 4px; bottom: 0; height: 2px; background: #86e6d6; }
.active { background: #4b4b50; }
.active::after { left: 0; right: 0; }
.badge { position: absolute; right: 3px; bottom: 4px; width: 17px; height: 17px; border: 1px solid #8c8c8c; border-radius: 50%; background: #2a2a2e; font: 12px/15px "Open Sans", sans-serif; text-align: center; }
.tray { margin-left: auto; display: flex; align-items: center; padding-right: 4px; }
.tray > svg { margin-right: 8px; }
.weather { display: flex; align-items: center; gap: 8px; margin-right: 25px; color: #fff; font-size: 13px; text-decoration: none; }
.weather text { font: 9px "Open Sans", sans-serif; fill: #fff; }
.tray .chevron { margin-right: 10px; }
.tray .meet { margin-right: 9px; }
.tray .cloud { margin-right: 6px; }
.tray .pen { margin: 0 13px 0 3px; }
.lang, time { font-size: 12px; }
time { display: flex; flex-direction: column; align-items: center; margin-left: 12px; line-height: 18px; }
.notes { position: relative; width: 49px; height: 40px; padding-right: 8px; border-right: 1px solid #6a6a6e; }
.notes .badge { right: 12px; }
```
